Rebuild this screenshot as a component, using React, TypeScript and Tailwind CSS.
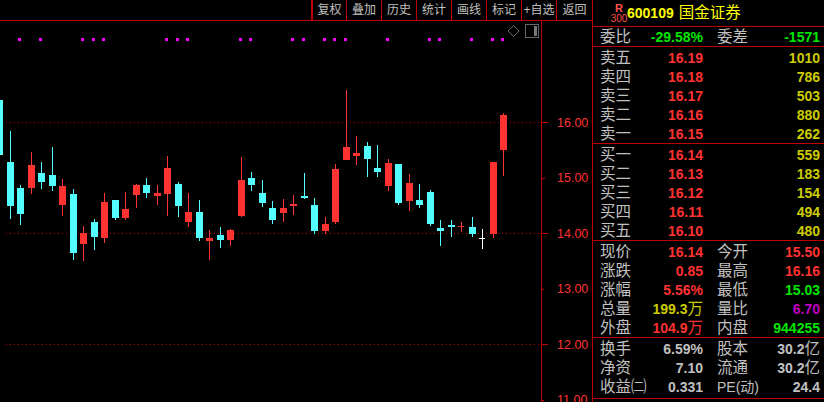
import React from 'react';

const FONT = "font-['Liberation_Sans','Noto_Sans_CJK_SC',sans-serif]";

const RED = 'text-[#ff3232]';
const GREEN = 'text-[#00e600]';
const YELLOW = 'text-[#cccc00]';
const PURPLE = 'text-[#c000c0]';
const GRAY = 'text-[#c0c0c0]';

const tools = ['叠加', '历史', '统计', '画线', '标记', '+自选'];

// x, body top, body bottom, wick top, wick bottom, colour, body width
type Candle = [number, number, number, number, number, 'r' | 'c' | 'w', number?];

const candles: Candle[] = [
  [-4, 100, 155, 100, 155, 'c'],
  [7, 162, 206, 131, 219, 'c'],
  [17, 188, 214, 185, 225, 'c'],
  [28, 165, 188, 152, 194, 'r'],
  [38, 173, 182, 162, 189, 'c'],
  [49, 175, 186, 147, 191, 'c'],
  [59, 186, 205, 179, 216, 'r'],
  [70, 194, 253, 189, 260, 'c'],
  [80, 233, 244, 226, 261, 'r'],
  [91, 222, 237, 219, 250, 'c'],
  [101, 202, 238, 193, 243, 'r'],
  [112, 200, 218, 200, 220, 'c'],
  [122, 209, 218, 192, 220, 'r'],
  [133, 185, 195, 184, 208, 'r'],
  [143, 185, 193, 178, 198, 'c'],
  [154, 193, 196, 185, 205, 'r'],
  [164, 168, 194, 156, 216, 'r'],
  [175, 184, 206, 182, 217, 'c'],
  [185, 212, 222, 193, 227, 'r'],
  [196, 212, 238, 200, 241, 'c'],
  [206, 238, 241, 230, 260, 'r'],
  [217, 235, 240, 227, 248, 'c'],
  [227, 230, 240, 229, 246, 'r'],
  [238, 180, 216, 157, 217, 'r'],
  [248, 178, 185, 172, 191, 'c'],
  [259, 193, 203, 180, 207, 'c'],
  [269, 208, 220, 201, 224, 'c'],
  [280, 208, 213, 199, 222, 'r'],
  [290, 204, 206, 195, 215, 'r'],
  [301, 196, 198, 173, 199, 'c'],
  [311, 205, 231, 198, 234, 'c'],
  [322, 224, 231, 217, 234, 'r'],
  [332, 169, 222, 164, 224, 'r'],
  [343, 147, 160, 90, 160, 'r'],
  [353, 153, 156, 136, 165, 'r'],
  [364, 146, 159, 142, 177, 'c'],
  [374, 168, 172, 145, 177, 'c'],
  [385, 163, 186, 159, 191, 'r'],
  [395, 164, 203, 164, 205, 'c'],
  [406, 183, 201, 174, 211, 'r'],
  [416, 200, 205, 184, 208, 'c'],
  [427, 192, 224, 190, 226, 'c'],
  [437, 228, 231, 220, 246, 'c'],
  [448, 225, 227, 220, 237, 'c'],
  [458, 226, 227, 222, 232, 'r', 6],
  [469, 227, 234, 217, 237, 'c'],
  [479, 238, 239, 229, 249, 'w', 6],
  [490, 162, 234, 162, 238, 'r'],
  [500, 115, 150, 113, 176, 'r'],
];

const candleColor = { r: '#ff3232', c: '#54ffff', w: '#ffffff' };

const dots = [
  18, 39, 81, 92, 102, 165, 176, 186, 239, 249, 291, 302, 323, 333, 344, 386, 428, 438, 470, 491, 501,
];

const axis = [
  { label: '16.00', tick: 'w-[6px]' },
  { label: '15.00', tick: 'w-[3px]' },
  { label: '14.00', tick: 'w-[6px]' },
  { label: '13.00', tick: 'w-[2px]' },
  { label: '12.00', tick: 'w-[6px]' },
  { label: '11.00', tick: 'w-[2px]' },
];

type Cell = { label?: React.ReactNode; value: React.ReactNode; color: string };

const Pair = ({ label, value, color }: Cell) => (
  <div className="w-[103px] flex justify-between items-center">
    <span className="text-[15.5px] text-[#c0c0c0] whitespace-nowrap">{label}</span>
    <span className={`text-[14px] font-bold whitespace-nowrap ${color}`}>{value}</span>
  </div>
);

const Row = ({ a, b }: { a: Cell; b: Cell }) => (
  <div className="h-[19px] flex gap-[14px] items-center leading-none">
    <Pair {...a} />
    <Pair {...b} />
  </div>
);

const wan = (n: string) => (
  <>
    {n}
    <span className="text-[15.5px] font-normal">万</span>
  </>
);

const yi = (n: string) => (
  <>
    {n}
    <span className="text-[15.5px] font-normal">亿</span>
  </>
);

const sells: [string, string, string][] = [
  ['卖五', '16.19', '1010'],
  ['卖四', '16.18', '786'],
  ['卖三', '16.17', '503'],
  ['卖二', '16.16', '880'],
  ['卖一', '16.15', '262'],
];

const buys: [string, string, string][] = [
  ['买一', '16.14', '559'],
  ['买二', '16.13', '183'],
  ['买三', '16.12', '154'],
  ['买四', '16.11', '494'],
  ['买五', '16.10', '480'],
];

const quotes: [Cell, Cell][] = [
  [
    { label: '现价', value: '16.14', color: RED },
    { label: '今开', value: '15.50', color: RED },
  ],
  [
    { label: '涨跌', value: '0.85', color: RED },
    { label: '最高', value: '16.16', color: RED },
  ],
  [
    { label: '涨幅', value: '5.56%', color: RED },
    { label: '最低', value: '15.03', color: GREEN },
  ],
  [
    { label: '总量', value: wan('199.3'), color: YELLOW },
    { label: '量比', value: '6.70', color: PURPLE },
  ],
  [
    { label: '外盘', value: wan('104.9'), color: RED },
    { label: '内盘', value: '944255', color: GREEN },
  ],
];

const finance: [Cell, Cell][] = [
  [
    { label: '换手', value: '6.59%', color: GRAY },
    { label: '股本', value: yi('30.2'), color: GRAY },
  ],
  [
    { label: '净资', value: '7.10', color: GRAY },
    { label: '流通', value: yi('30.2'), color: GRAY },
  ],
  [
    { label: '收益㈡', value: '0.331', color: GRAY },
    { label: <span className="text-[14px]">PE(动)</span>, value: '24.4', color: GRAY },
  ],
];

const Chart = () => (
  <svg viewBox="0 21 541 381" className="w-[541px] h-[381px] shrink-0 block" shapeRendering="crispEdges">
    {[122, 233, 344].map((y) => (
      <line key={y} x1="6" x2="541" y1={y + 0.5} y2={y + 0.5} stroke="#c00000" strokeDasharray="1 3" />
    ))}
    {dots.map((x) => (
      <rect key={x} x={x} y="38" width="3" height="3" fill="#ff00ff" />
    ))}
    {candles.map(([x, top, bottom, wickTop, wickBottom, c, w = 7]) => (
      <g key={x} fill={candleColor[c]}>
        <rect x={x + 3} y={wickTop} width="1" height={wickBottom - wickTop} />
        <rect x={x} y={top} width={w} height={bottom - top} />
      </g>
    ))}
    <path d="M513.5 25.5 L519 31 L513.5 36.5 L508 31 Z" fill="none" stroke="#666666" shapeRendering="auto" />
    <rect x="525.5" y="24.5" width="13" height="13" fill="none" stroke="#666666" />
    <rect x="534" y="26" width="3" height="10" fill="#777777" />
  </svg>
);

export default function App() {
  return (
    <div className={`w-[824px] h-[402px] bg-black flex overflow-hidden ${FONT}`}>
      <div className="w-[592px] shrink-0 flex flex-col">
        <div className="h-[21px] shrink-0 flex justify-end border-b border-[#c00000] text-[12px] leading-none text-[#c0c0c0]">
          <div className="w-[36px] flex items-center justify-center border-l-2 border-r border-[#c00000]">复权</div>
          {tools.map((t) => (
            <div key={t} className="w-[35px] flex items-center justify-center border-r border-[#c00000] whitespace-nowrap">
              {t}
            </div>
          ))}
          <div className="w-[35px] flex items-center justify-center">返回</div>
        </div>
        <div className="flex-1 flex min-h-0">
          <Chart />
          <div className="flex-1 border-l border-[#c00000] pt-[74px] flex flex-col">
            {axis.map((a) => (
              <div key={a.label} className="h-[55.5px] shrink-0 relative flex items-center">
                <div className={`h-px bg-[#c00000] ${a.tick}`} />
                <span className="absolute left-[15px] text-[12.5px] leading-none text-[#ff3232]">{a.label}</span>
              </div>
            ))}
          </div>
        </div>
      </div>

      <div className="flex-1 border-l border-[#c00000] flex flex-col">
        <div className="h-[27px] shrink-0 border-b border-[#c00000] flex items-center pl-[18px] text-[#ffff00]">
          <div className="w-[16px] flex flex-col items-center leading-none text-[#ff5050]">
            <span className="text-[11px] font-bold h-[11px]">R</span>
            <span className="text-[10px] h-[10px]">300</span>
          </div>
          <span className="text-[14px] font-bold leading-none">600109</span>
          <span className="text-[15.5px] ml-[5px] leading-none">国金证券</span>
        </div>

        <div className="h-[20px] shrink-0 border-b border-[#c00000] pl-[7px]">
          <Row
            a={{ label: '委比', value: '-29.58%', color: GREEN }}
            b={{ label: '委差', value: '-1571', color: GREEN }}
          />
        </div>

        <div className="h-[97px] shrink-0 border-b border-[#c00000] pl-[7px] pt-px">
          {sells.map(([label, price, vol]) => (
            <Row key={label} a={{ label, value: price, color: RED }} b={{ value: vol, color: YELLOW }} />
          ))}
        </div>

        <div className="h-[97px] shrink-0 border-b border-[#c00000] pl-[7px] pt-px">
          {buys.map(([label, price, vol]) => (
            <Row key={label} a={{ label, value: price, color: RED }} b={{ value: vol, color: YELLOW }} />
          ))}
        </div>

        <div className="h-[97px] shrink-0 border-b border-[#c00000] pl-[7px] pt-px">
          {quotes.map(([a, b], i) => (
            <Row key={i} a={a} b={b} />
          ))}
        </div>

        <div className="h-[61px] shrink-0 border-b border-[#c00000] pl-[7px] pt-px">
          {finance.map(([a, b], i) => (
            <Row key={i} a={a} b={b} />
          ))}
        </div>
      </div>
    </div>
  );
}
